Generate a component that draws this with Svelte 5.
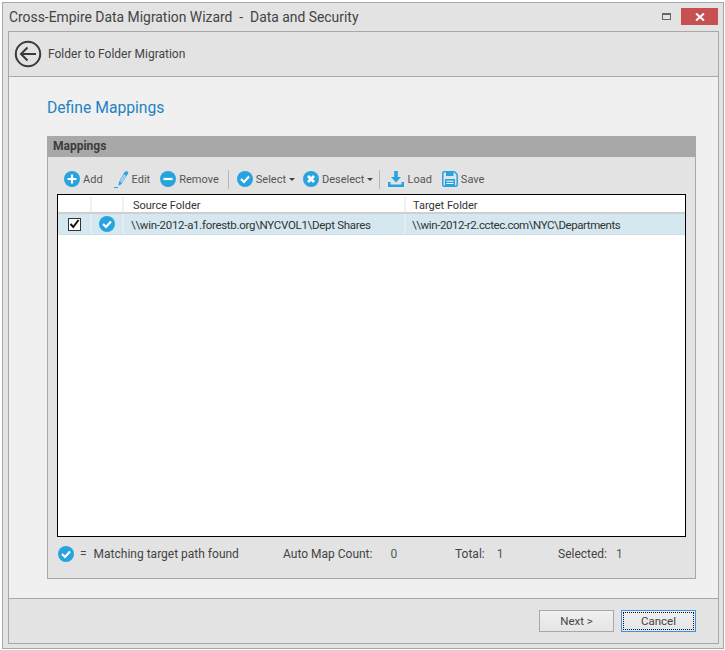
<script>
	const rows = [
		{
			source: '\\\\win-2012-a1.forestb.org\\NYCVOL1\\Dept Shares',
			target: '\\\\win-2012-r2.cctec.com\\NYC\\Departments'
		}
	]
</script>

{#snippet circle(kind, size)}
	<svg class="icon" width={size} height={size} viewBox="0 0 16 16">
		<circle cx="8" cy="8" r="8" fill="#29a3df" />
		{#if kind === 'add'}
			<path d="M8 3.500v9M3.500 8h9" stroke="#fff" stroke-width="2.200" fill="none" />
		{:else if kind === 'remove'}
			<path d="M3.500 8h9" stroke="#fff" stroke-width="2.200" fill="none" />
		{:else if kind === 'check'}
			<path d="M4 8l3 3 5-5.500" stroke="#fff" stroke-width="2.200" fill="none" />
		{:else if kind === 'cross'}
			<path d="M5 5l6 6M11 5l-6 6" stroke="#fff" stroke-width="2.800" fill="none" />
		{/if}
	</svg>
{/snippet}

<div class="window">
	<div class="titlebar">
		<span class="title">Cross-Empire Data Migration Wizard &nbsp;-&nbsp; Data and Security</span>
		<div class="controls">
			<span class="maximize"></span>
			<span class="close">
				<svg width="10" height="8" viewBox="0 0 10 8">
					<path d="M1 0.500l8 7M9 0.500l-8 7" stroke="#fff" stroke-width="2" fill="none" />
				</svg>
			</span>
		</div>
	</div>

	<div class="frame">
		<div class="header">
			<svg width="28" height="28" viewBox="0 0 28 28">
				<circle cx="14" cy="14" r="12.200" stroke="#3a3a3a" stroke-width="2" fill="none" />
				<path d="M22 14H7M13.500 7.500L7 14l6.500 6.500" stroke="#3a3a3a" stroke-width="2" fill="none" />
			</svg>
			<span>Folder to Folder Migration</span>
		</div>

		<div class="content">
			<h1>Define Mappings</h1>

			<section class="panel">
				<div class="panel-title">Mappings</div>
				<div class="panel-body">
					<div class="toolbar">
						<button class="tool add">{@render circle('add', 16)}<span>Add</span></button>
						<button class="tool edit">
							<svg class="icon" width="15" height="18" viewBox="0 0 15 18">
								<path d="M4.500 16l.5-4L10.500 2.300Q12 .5 13.500 1.500T13.500 4.500L7.500 14zM6 11.500l2 1.200 4-7-2-1.200z" fill="#29a3df" fill-rule="evenodd" />
								<path d="M6.500 11.500l1.500 1 4-6.500-1.500-1z" fill="#8fcfee" />
								<path d="M0 17.500h4" stroke="#29a3df" stroke-width="1" />
							</svg>
							<span>Edit</span>
						</button>
						<button class="tool remove">{@render circle('remove', 16)}<span>Remove</span></button>
						<span class="sep"></span>
						<button class="tool select">
							{@render circle('check', 16)}
							<span>Select</span>
							<i class="caret"></i>
						</button>
						<button class="tool deselect">
							{@render circle('cross', 16)}
							<span>Deselect</span>
							<i class="caret"></i>
						</button>
						<span class="sep second"></span>
						<button class="tool load">
							<svg class="icon" width="16" height="16" viewBox="0 0 16 16">
								<path d="M6.200 0h3.600v6H13l-5 5.500L3 6h3.200z" fill="#29a3df" />
								<path d="M0 11h2.500v2.500h11V11H16v5H0z" fill="#29a3df" />
							</svg>
							<span>Load</span>
						</button>
						<button class="tool save">
							<svg class="icon" width="16" height="16" viewBox="0 0 16 16">
								<path d="M2 .800h10.500L15.200 3.500V14a1.200 1.200 0 0 1-1.200 1.200H2A1.200 1.200 0 0 1 .800 14V2A1.200 1.200 0 0 1 2 .800z" fill="none" stroke="#29a3df" stroke-width="1.500" />
								<path d="M4 1h7.500v4H4zM3 8h10v7H3z" fill="#29a3df" />
								<path d="M4.500 10.200h7M4.500 12.500h7" stroke="#fff" stroke-width="1" />
							</svg>
							<span>Save</span>
						</button>
					</div>

					<div class="grid">
						<div class="grid-row grid-head">
							<div class="col-check"></div>
							<div class="col-status"></div>
							<div class="col-source">Source Folder</div>
							<div class="col-target">Target Folder</div>
						</div>
						{#each rows as row}
							<div class="grid-row grid-item">
								<div class="col-check">
									<span class="checkbox">
										<svg width="11" height="10" viewBox="0 0 11 10">
											<path d="M1.500 5l2.800 3L9.500 1" stroke="#111" stroke-width="2" fill="none" />
										</svg>
									</span>
								</div>
								<div class="col-status">{@render circle('check', 16)}</div>
								<div class="col-source">{row.source}</div>
								<div class="col-target">{row.target}</div>
							</div>
						{/each}
					</div>

					<div class="legend">
						<span class="legend-key">
							{@render circle('check', 16)}
							<span class="equals">=</span>
							Matching target path found
						</span>
						<span class="stat auto">Auto Map Count:<b>0</b></span>
						<span class="stat total">Total:<b>1</b></span>
						<span class="stat selected">Selected:<b>1</b></span>
					</div>
				</div>
			</section>
		</div>

		<div class="footer">
			<button class="btn">Next &gt;</button>
			<button class="btn focused"><span>Cancel</span></button>
		</div>
	</div>
</div>

<style>
	:global(body) {
		margin: 0;
		background: #fff;
	}

	.window {
		box-sizing: border-box;
		width: 722px;
		height: 647px;
		margin: 2px;
		padding: 0 4px 4px 5px;
		display: flex;
		flex-direction: column;
		background: #e3e3e3;
		border: 1px solid #a8a8a8;
		font-family: Roboto, sans-serif;
		font-size: 12px;
		color: #444;
	}

	.titlebar {
		height: 28px;
		flex: none;
		display: flex;
		justify-content: space-between;
		align-items: flex-start;
	}

	.title {
		font-size: 13.900px;
		line-height: 28px;
		color: #444;
		margin-left: 1px;
	}

	.controls {
		display: flex;
		align-items: center;
		gap: 10px;
		margin-top: 5px;
		margin-right: 1px;
	}

	.maximize {
		box-sizing: border-box;
		width: 9px;
		height: 7px;
		border: 1px solid #666;
		border-top-width: 2px;
	}

	.close {
		width: 37px;
		height: 17px;
		display: flex;
		align-items: center;
		justify-content: center;
		background: #c75050;
	}

	.frame {
		flex: 1;
		min-height: 0;
		display: flex;
		flex-direction: column;
		border: 1px solid #a8a8a8;
	}

	.header {
		height: 45px;
		flex: none;
		box-sizing: border-box;
		padding-left: 5px;
		display: flex;
		align-items: center;
		gap: 6px;
		border-bottom: 1px solid #a8a8a8;
	}

	.content {
		flex: 1;
		min-height: 0;
		padding: 20px 22px 19px 38px;
		display: flex;
		flex-direction: column;
		background: #f0f0f0;
	}

	h1 {
		margin: 0 0 17px;
		font-size: 15.700px;
		font-weight: 400;
		line-height: 22px;
		color: #1f82c0;
	}

	.panel {
		flex: 1;
		min-height: 0;
		display: flex;
		flex-direction: column;
		background: #e3e3e3;
		border: 1px solid #a8a8a8;
		border-top: 0;
	}

	.panel-title {
		height: 21px;
		flex: none;
		padding-left: 5px;
		line-height: 20px;
		font-weight: 700;
		background: #a8a8a8;
		color: #3c3c3c;
	}

	.panel-body {
		flex: 1;
		min-height: 0;
		padding: 0 9px;
		display: flex;
		flex-direction: column;
	}

	.toolbar {
		height: 37px;
		flex: none;
		padding: 7px 0 0 7px;
		box-sizing: border-box;
		display: flex;
		align-items: center;
	}

	.tool {
		display: flex;
		align-items: center;
		gap: 3px;
		padding: 0;
		border: 0;
		background: none;
		font: inherit;
		font-size: 11px;
		color: #555;
	}

	.edit { margin-left: 11px; }
	.remove { margin-left: 10px; }
	.select { margin-left: 8px; }
	.deselect { margin-left: 8px; }
	.load { margin-left: 8px; }
	.save { margin-left: 10px; }

	.icon {
		flex: none;
	}

	.sep {
		width: 1px;
		height: 19px;
		margin-left: 9px;
		background: #b5b5b5;
	}

	.sep.second {
		margin-left: 6px;
	}

	.caret {
		width: 0;
		height: 0;
		border: 3px solid transparent;
		border-top-color: #444;
		border-bottom: 0;
	}

	.grid {
		flex: 1;
		min-height: 0;
		background: #fff;
		border: 1px solid #000;
	}

	.grid-row {
		display: flex;
		box-sizing: border-box;
	}

	.grid-row > div {
		box-sizing: border-box;
		display: flex;
		align-items: center;
		white-space: nowrap;
		border-right: 2px solid #f0f0f0;
	}

	.grid-head {
		height: 19px;
		padding-top: 2px;
		font-size: 11px;
		color: #333;
		border-bottom: 2px solid #cfcfcf;
	}

	.grid-head .col-source {
		padding-left: 9px;
		padding-top: 1px;
	}

	.grid-head .col-target {
		padding-top: 1px;
	}

	.grid-item {
		height: 21px;
		background: #d5e8ef;
		border-bottom: 1px solid #cfe0e6;
		font-size: 11.500px;
		color: #333;
	}

	.grid-item > div {
		border-right-color: #e3eef2;
	}

	.grid-item .col-source {
		padding-top: 1px;
		letter-spacing: -0.300px;
	}

	.grid-item .col-target {
		padding: 1px 0 0 6px;
		letter-spacing: -0.420px;
	}

	.col-check {
		width: 34px;
		justify-content: center;
	}

	.col-status {
		width: 32px;
		padding-right: 1px;
		justify-content: center;
	}

	.col-source {
		width: 282px;
		padding-left: 7px;
	}

	.col-target {
		flex: 1;
		padding-left: 7px;
		border-right: 0 !important;
	}

	.checkbox {
		box-sizing: border-box;
		width: 13px;
		height: 13px;
		display: flex;
		align-items: center;
		justify-content: center;
		background: #fff;
		border: 1px solid #333;
	}

	.legend {
		height: 41px;
		flex: none;
		display: flex;
		align-items: center;
		padding-bottom: 7px;
		box-sizing: border-box;
	}

	.legend-key {
		width: 226px;
		display: flex;
		align-items: center;
		padding-left: 1px;
		box-sizing: border-box;
	}

	.equals {
		margin: 0 7px 0 6px;
	}

	.stat {
		display: flex;
	}

	.stat b {
		font-weight: 400;
		color: #4a5f50;
		margin-left: 12px;
	}

	.auto {
		width: 172px;
	}

	.auto b {
		margin-left: 18px;
	}

	.total {
		width: 103px;
	}

	.selected b {
		margin-left: 9px;
	}

	.footer {
		height: 45px;
		flex: none;
		box-sizing: border-box;
		padding: 11px 22px 0 0;
		display: flex;
		justify-content: flex-end;
		gap: 7px;
		border-top: 1px solid #a8a8a8;
	}

	.btn {
		box-sizing: border-box;
		width: 75px;
		height: 22px;
		padding: 0;
		font: inherit;
		font-size: 11.500px;
		color: #444;
		background: linear-gradient(#f0f0f0, #e5e5e5);
		border: 1px solid #a8a8a8;
	}

	.focused {
		padding: 1px;
		border-color: #3d90e6;
	}

	.focused span {
		box-sizing: border-box;
		display: block;
		height: 100%;
		line-height: 16px;
		border: 1px dotted #111;
	}
</style>
